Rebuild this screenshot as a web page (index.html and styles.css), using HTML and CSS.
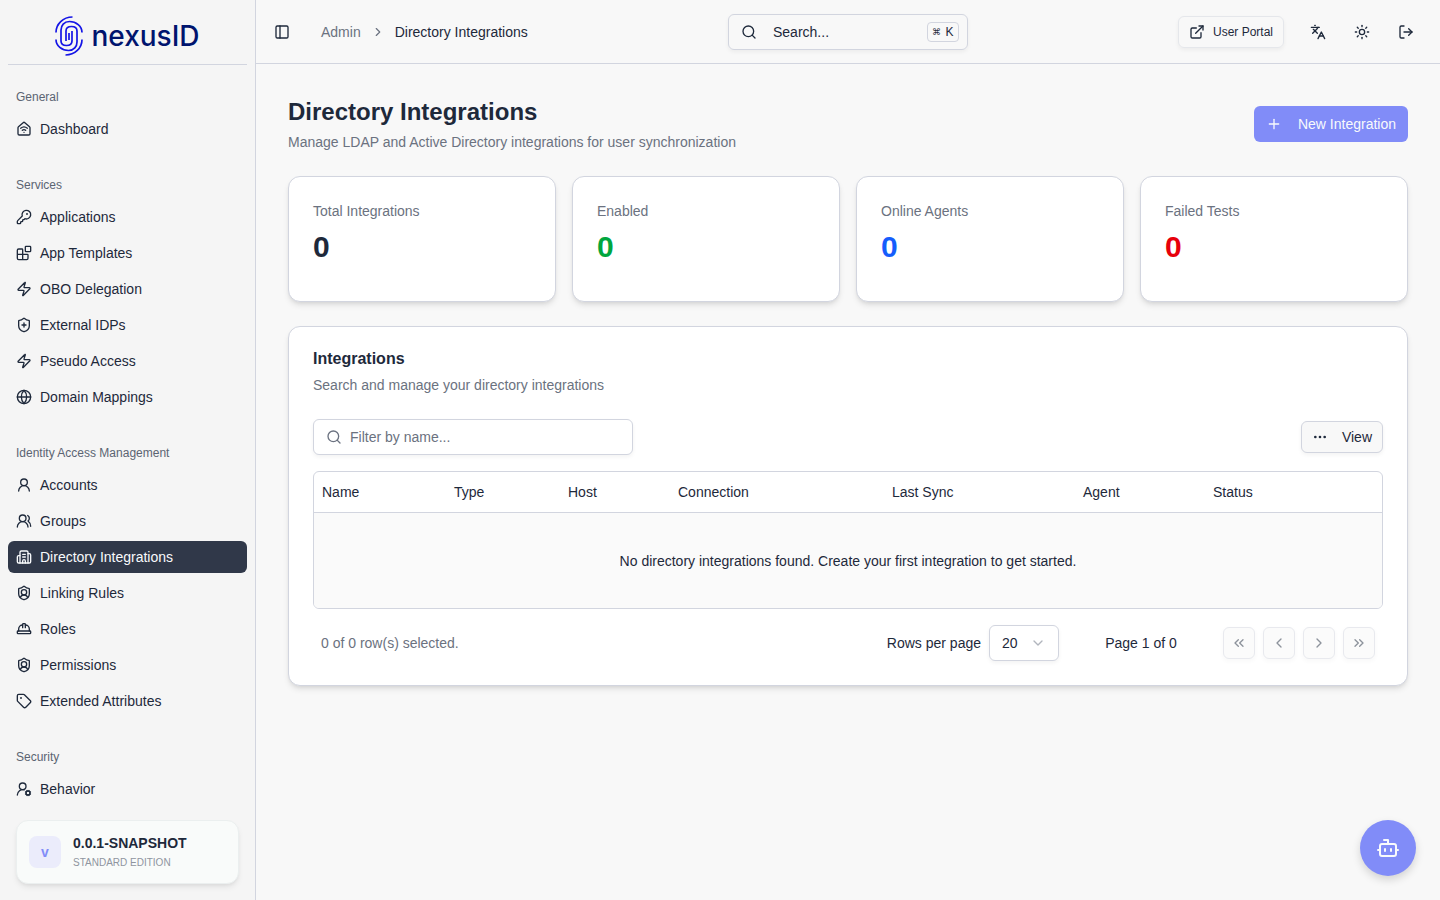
FILE: index.html
```html
<!DOCTYPE html>
<html lang="en">
<head>
    <meta charset="UTF-8">
    <meta name="viewport" content="width=device-width, initial-scale=1.0">
    <title>Directory Integrations - nexusID</title>
    <link rel="stylesheet" href="styles.css">
</head>
<body>
    <!-- Icon sprite -->
    <svg class="sprite" aria-hidden="true">
        <symbol id="i-home" viewBox="0 0 24 24"><path d="M9.5 13.866a4 4 0 0 1 5 .01"/><path d="M12 17h.01"/><path d="M3 10a2 2 0 0 1 .709-1.528l7-6a2 2 0 0 1 2.582 0l7 6A2 2 0 0 1 21 10v9a2 2 0 0 1-2 2H5a2 2 0 0 1-2-2z"/><path d="M7 10.754a8 8 0 0 1 10 0"/></symbol>
        <symbol id="i-key" viewBox="0 0 24 24"><path d="M2.586 17.414A2 2 0 0 0 2 18.828V21a1 1 0 0 0 1 1h3a1 1 0 0 0 1-1v-1a1 1 0 0 1 1-1h1a1 1 0 0 0 1-1v-1a1 1 0 0 1 1-1h.172a2 2 0 0 0 1.414-.586l.814-.814a6.5 6.5 0 1 0-4-4z"/><circle cx="16.5" cy="7.5" r=".5" fill="currentColor"/></symbol>
        <symbol id="i-blocks" viewBox="0 0 24 24"><path d="M10 22V7a1 1 0 0 0-1-1H4a2 2 0 0 0-2 2v12a2 2 0 0 0 2 2h12a2 2 0 0 0 2-2v-5a1 1 0 0 0-1-1H2"/><rect x="14" y="2" width="8" height="8" rx="1"/></symbol>
        <symbol id="i-zap" viewBox="0 0 24 24"><path d="M4 14a1 1 0 0 1-.78-1.63l9.9-10.2a.5.5 0 0 1 .86.46l-1.92 6.02A1 1 0 0 0 13 10h7a1 1 0 0 1 .78 1.63l-9.9 10.2a.5.5 0 0 1-.86-.46l1.92-6.02A1 1 0 0 0 11 14z"/></symbol>
        <symbol id="i-shield-plus" viewBox="0 0 24 24"><path d="M20 13c0 5-3.5 7.5-7.66 8.95a1 1 0 0 1-.67-.01C7.5 20.5 4 18 4 13V6a1 1 0 0 1 1-1c2 0 4.5-1.2 6.24-2.72a1.17 1.17 0 0 1 1.52 0C14.51 3.81 17 5 19 5a1 1 0 0 1 1 1z"/><path d="M9 12h6"/><path d="M12 9v6"/></symbol>
        <symbol id="i-globe" viewBox="0 0 24 24"><circle cx="12" cy="12" r="10"/><path d="M12 2a14.5 14.5 0 0 0 0 20 14.5 14.5 0 0 0 0-20"/><path d="M2 12h20"/></symbol>
        <symbol id="i-user" viewBox="0 0 24 24"><circle cx="12" cy="8" r="5"/><path d="M20 21a8 8 0 0 0-16 0"/></symbol>
        <symbol id="i-users" viewBox="0 0 24 24"><path d="M18 21a8 8 0 0 0-16 0"/><circle cx="10" cy="8" r="5"/><path d="M22 20c0-3.37-2-6.5-4-8a5 5 0 0 0-.45-8.3"/></symbol>
        <symbol id="i-building" viewBox="0 0 24 24"><path d="M10 12h4"/><path d="M10 8h4"/><path d="M14 21v-3a2 2 0 0 0-4 0v3"/><path d="M6 10H4a2 2 0 0 0-2 2v7a2 2 0 0 0 2 2h16a2 2 0 0 0 2-2V9a2 2 0 0 0-2-2h-2"/><path d="M6 21V5a2 2 0 0 1 2-2h8a2 2 0 0 1 2 2v16"/></symbol>
        <symbol id="i-shield-user" viewBox="0 0 24 24"><path d="M20 13c0 5-3.5 7.5-7.66 8.95a1 1 0 0 1-.67-.01C7.5 20.5 4 18 4 13V6a1 1 0 0 1 1-1c2 0 4.5-1.2 6.24-2.72a1.17 1.17 0 0 1 1.52 0C14.51 3.81 17 5 19 5a1 1 0 0 1 1 1z"/><path d="M6.376 18.91a6 6 0 0 1 11.249.003"/><circle cx="12" cy="11" r="4"/></symbol>
        <symbol id="i-hat" viewBox="0 0 24 24"><path d="M10 10V5a1 1 0 0 1 1-1h2a1 1 0 0 1 1 1v5"/><path d="M14 6a6 6 0 0 1 6 6v3"/><path d="M4 15v-3a6 6 0 0 1 6-6"/><rect x="2" y="15" width="20" height="4" rx="1"/></symbol>
        <symbol id="i-tag" viewBox="0 0 24 24"><path d="M12.586 2.586A2 2 0 0 0 11.172 2H4a2 2 0 0 0-2 2v7.172a2 2 0 0 0 .586 1.414l8.704 8.704a2.426 2.426 0 0 0 3.42 0l6.58-6.58a2.426 2.426 0 0 0 0-3.42z"/><circle cx="7.5" cy="7.5" r=".5" fill="currentColor"/></symbol>
        <symbol id="i-user-cog" viewBox="0 0 24 24"><path d="M2 21a8 8 0 0 1 10.434-7.62"/><circle cx="10" cy="8" r="5"/><circle cx="18" cy="18" r="3"/><path d="m14.305 19.53.923-.382"/><path d="m15.228 16.852-.923-.383"/><path d="m16.852 15.228-.383-.923"/><path d="m16.852 20.772-.383.924"/><path d="m19.148 15.228.383-.923"/><path d="m19.53 21.696-.382-.924"/><path d="m20.772 16.852.924-.383"/><path d="m20.772 19.148.924.383"/></symbol>
        <symbol id="i-panel" viewBox="0 0 24 24"><rect x="3" y="3" width="18" height="18" rx="2"/><path d="M9 3v18"/></symbol>
        <symbol id="i-search" viewBox="0 0 24 24"><path d="m21 21-4.34-4.34"/><circle cx="11" cy="11" r="8"/></symbol>
        <symbol id="i-external" viewBox="0 0 24 24"><path d="M15 3h6v6"/><path d="M10 14 21 3"/><path d="M18 13v6a2 2 0 0 1-2 2H5a2 2 0 0 1-2-2V8a2 2 0 0 1 2-2h6"/></symbol>
        <symbol id="i-languages" viewBox="0 0 24 24"><path d="m5 8 6 6"/><path d="m4 14 6-6 2-3"/><path d="M2 5h12"/><path d="M7 2h1"/><path d="m22 22-5-10-5 10"/><path d="M14 18h6"/></symbol>
        <symbol id="i-sun" viewBox="0 0 24 24"><circle cx="12" cy="12" r="4"/><path d="M12 2v2"/><path d="M12 20v2"/><path d="m4.93 4.93 1.41 1.41"/><path d="m17.66 17.66 1.41 1.41"/><path d="M2 12h2"/><path d="M20 12h2"/><path d="m6.34 17.66-1.41 1.41"/><path d="m19.07 4.93-1.41 1.41"/></symbol>
        <symbol id="i-logout" viewBox="0 0 24 24"><path d="m16 17 5-5-5-5"/><path d="M21 12H9"/><path d="M9 21H5a2 2 0 0 1-2-2V5a2 2 0 0 1 2-2h4"/></symbol>
        <symbol id="i-plus" viewBox="0 0 24 24"><path d="M5 12h14"/><path d="M12 5v14"/></symbol>
        <symbol id="i-dots" viewBox="0 0 24 24"><circle cx="12" cy="12" r="1"/><circle cx="19" cy="12" r="1"/><circle cx="5" cy="12" r="1"/></symbol>
        <symbol id="i-down" viewBox="0 0 24 24"><path d="m6 9 6 6 6-6"/></symbol>
        <symbol id="i-left" viewBox="0 0 24 24"><path d="m15 18-6-6 6-6"/></symbol>
        <symbol id="i-right" viewBox="0 0 24 24"><path d="m9 18 6-6-6-6"/></symbol>
        <symbol id="i-first" viewBox="0 0 24 24"><path d="m11 17-5-5 5-5"/><path d="m18 17-5-5 5-5"/></symbol>
        <symbol id="i-last" viewBox="0 0 24 24"><path d="m6 17 5-5-5-5"/><path d="m13 17 5-5-5-5"/></symbol>
        <symbol id="i-bot" viewBox="0 0 24 24"><path d="M12 8V4H8"/><rect x="4" y="8" width="16" height="12" rx="2"/><path d="M2 14h2"/><path d="M20 14h2"/><path d="M15 13v2"/><path d="M9 13v2"/></symbol>
    </svg>

    <div class="layout">
        <aside class="sidebar">
            <a class="logo" href="#">
                <svg class="logo-mark" viewBox="0 0 28 40" aria-hidden="true">
                    <g id="whorl">
                        <path d="M17.500 1C8 1 1 8 1 16.500"/>
                        <path d="M27 16.500C27 10 21 5.500 14.500 5.500 9 5.500 6 9.500 6 14v11c0 3 2.500 4.500 5.500 4.500s5.500-1.500 5.500-4.500"/>
                    </g>
                    <use href="#whorl" transform="rotate(180 14 20)"/>
                    <path d="M11 25V15M17 25V15M14 17v7"/>
                </svg>
                <span class="logo-text">nexusID</span>
            </a>

            <nav class="nav">
                <section class="nav-group">
                    <h2 class="nav-label">General</h2>
                    <a class="nav-item" href="#"><svg class="icon"><use href="#i-home"/></svg>Dashboard</a>
                </section>
                <section class="nav-group">
                    <h2 class="nav-label">Services</h2>
                    <a class="nav-item" href="#"><svg class="icon"><use href="#i-key"/></svg>Applications</a>
                    <a class="nav-item" href="#"><svg class="icon"><use href="#i-blocks"/></svg>App Templates</a>
                    <a class="nav-item" href="#"><svg class="icon"><use href="#i-zap"/></svg>OBO Delegation</a>
                    <a class="nav-item" href="#"><svg class="icon"><use href="#i-shield-plus"/></svg>External IDPs</a>
                    <a class="nav-item" href="#"><svg class="icon"><use href="#i-zap"/></svg>Pseudo Access</a>
                    <a class="nav-item" href="#"><svg class="icon"><use href="#i-globe"/></svg>Domain Mappings</a>
                </section>
                <section class="nav-group">
                    <h2 class="nav-label">Identity Access Management</h2>
                    <a class="nav-item" href="#"><svg class="icon"><use href="#i-user"/></svg>Accounts</a>
                    <a class="nav-item" href="#"><svg class="icon"><use href="#i-users"/></svg>Groups</a>
                    <a class="nav-item active" href="#" aria-current="page"><svg class="icon"><use href="#i-building"/></svg>Directory Integrations</a>
                    <a class="nav-item" href="#"><svg class="icon"><use href="#i-shield-user"/></svg>Linking Rules</a>
                    <a class="nav-item" href="#"><svg class="icon"><use href="#i-hat"/></svg>Roles</a>
                    <a class="nav-item" href="#"><svg class="icon"><use href="#i-shield-user"/></svg>Permissions</a>
                    <a class="nav-item" href="#"><svg class="icon"><use href="#i-tag"/></svg>Extended Attributes</a>
                </section>
                <section class="nav-group">
                    <h2 class="nav-label">Security</h2>
                    <a class="nav-item" href="#"><svg class="icon"><use href="#i-user-cog"/></svg>Behavior</a>
                </section>
            </nav>

            <div class="sidebar-footer">
                <div class="version">
                    <span class="version-badge">v</span>
                    <div>
                        <div class="version-number">0.0.1-SNAPSHOT</div>
                        <div class="version-edition">STANDARD EDITION</div>
                    </div>
                </div>
            </div>
        </aside>

        <div class="content">
            <header class="topbar">
                <div class="topbar-left">
                    <button class="icon-btn small" aria-label="Toggle sidebar"><svg class="icon"><use href="#i-panel"/></svg></button>
                    <nav class="breadcrumb" aria-label="Breadcrumb">
                        <a href="#">Admin</a>
                        <svg class="icon crumb-sep"><use href="#i-right"/></svg>
                        <span class="current">Directory Integrations</span>
                    </nav>
                </div>
                <button class="search-btn">
                    <svg class="icon"><use href="#i-search"/></svg>
                    <span>Search...</span>
                    <kbd><span class="cmd">⌘</span>K</kbd>
                </button>
                <div class="topbar-right">
                    <a class="portal-btn" href="#"><svg class="icon"><use href="#i-external"/></svg>User Portal</a>
                    <div class="topbar-actions">
                        <button class="icon-btn" aria-label="Language"><svg class="icon"><use href="#i-languages"/></svg></button>
                        <button class="icon-btn" aria-label="Theme"><svg class="icon"><use href="#i-sun"/></svg></button>
                        <button class="icon-btn" aria-label="Log out"><svg class="icon"><use href="#i-logout"/></svg></button>
                    </div>
                </div>
            </header>

            <main class="page">
                <div class="page-header">
                    <div>
                        <h1>Directory Integrations</h1>
                        <p class="muted">Manage LDAP and Active Directory integrations for user synchronization</p>
                    </div>
                    <button class="primary-btn"><svg class="icon"><use href="#i-plus"/></svg>New Integration</button>
                </div>

                <div class="stats">
                    <div class="card stat">
                        <div class="muted">Total Integrations</div>
                        <div class="stat-value">0</div>
                    </div>
                    <div class="card stat">
                        <div class="muted">Enabled</div>
                        <div class="stat-value green">0</div>
                    </div>
                    <div class="card stat">
                        <div class="muted">Online Agents</div>
                        <div class="stat-value blue">0</div>
                    </div>
                    <div class="card stat">
                        <div class="muted">Failed Tests</div>
                        <div class="stat-value red">0</div>
                    </div>
                </div>

                <section class="card panel">
                    <h2>Integrations</h2>
                    <p class="muted">Search and manage your directory integrations</p>

                    <div class="toolbar">
                        <div class="filter">
                            <svg class="icon"><use href="#i-search"/></svg>
                            <input type="text" placeholder="Filter by name..." aria-label="Filter by name">
                        </div>
                        <button class="view-btn"><svg class="icon"><use href="#i-dots"/></svg>View</button>
                    </div>

                    <div class="table-wrap">
                        <table>
                            <thead>
                                <tr>
                                    <th class="col-name">Name</th>
                                    <th class="col-type">Type</th>
                                    <th class="col-host">Host</th>
                                    <th class="col-connection">Connection</th>
                                    <th class="col-sync">Last Sync</th>
                                    <th class="col-agent">Agent</th>
                                    <th class="col-status">Status</th>
                                </tr>
                            </thead>
                            <tbody>
                                <tr>
                                    <td class="empty" colspan="7">No directory integrations found. Create your first integration to get started.</td>
                                </tr>
                            </tbody>
                        </table>
                    </div>

                    <div class="pagination">
                        <div class="muted">0 of 0 row(s) selected.</div>
                        <div class="pagination-controls">
                            <div class="rows-per-page">
                                <label for="pageSize">Rows per page</label>
                                <div class="select-wrap">
                                    <select id="pageSize">
                                        <option>10</option>
                                        <option selected>20</option>
                                        <option>50</option>
                                    </select>
                                    <svg class="icon"><use href="#i-down"/></svg>
                                </div>
                            </div>
                            <div class="page-count">Page 1 of 0</div>
                            <div class="page-buttons">
                                <button disabled aria-label="First page"><svg class="icon"><use href="#i-first"/></svg></button>
                                <button disabled aria-label="Previous page"><svg class="icon"><use href="#i-left"/></svg></button>
                                <button disabled aria-label="Next page"><svg class="icon"><use href="#i-right"/></svg></button>
                                <button disabled aria-label="Last page"><svg class="icon"><use href="#i-last"/></svg></button>
                            </div>
                        </div>
                    </div>
                </section>
            </main>
        </div>
    </div>

    <button class="chat-btn" aria-label="Open assistant"><svg class="icon"><use href="#i-bot"/></svg></button>
</body>
</html>
```
FILE: styles.css
```css
* {
    box-sizing: border-box;
}

body {
    margin: 0;
    font-family: "Liberation Sans", Arial, sans-serif;
    font-size: 14px;
    line-height: 20px;
    color: #1e293b;
    background-color: #f8f8f8;
}

h1, h2, p {
    margin: 0;
}

a {
    color: inherit;
    text-decoration: none;
}

button, input, select {
    font: inherit;
    color: inherit;
}

button {
    padding: 0;
    border: none;
    background: none;
    cursor: pointer;
}

.sprite {
    display: none;
}

.icon {
    width: 16px;
    height: 16px;
    flex-shrink: 0;
    fill: none;
    stroke: currentColor;
    stroke-width: 2;
    stroke-linecap: round;
    stroke-linejoin: round;
}

.muted {
    color: #6b7280;
}

.layout {
    display: flex;
    min-height: 100vh;
}

/* Sidebar */
.sidebar {
    position: sticky;
    top: 0;
    display: flex;
    flex-direction: column;
    width: 256px;
    height: 100vh;
    flex-shrink: 0;
    background-color: #f5f5f5;
    border-right: 1px solid #d2d5df;
}

.logo {
    display: flex;
    align-items: center;
    justify-content: center;
    gap: 8px;
    margin: 8px 8px 0;
    padding: 8px 0;
    border-bottom: 1px solid #d2d5df;
}

.logo-mark {
    width: 28px;
    height: 40px;
    fill: none;
    stroke: #1414e6;
    stroke-width: 1.7;
}

.logo-text {
    font-family: Inter, sans-serif;
    font-size: 28px;
    font-weight: 500;
    color: #00146e;
}

.nav {
    flex: 1;
    min-height: 0;
    padding: 8px 0 0;
    overflow-y: auto;
    scrollbar-width: none;
}

.nav-group {
    display: flex;
    flex-direction: column;
    gap: 4px;
    padding: 8px;
}

.nav-group + .nav-group {
    margin-top: 8px;
}

.nav-label {
    margin-bottom: -4px;
    padding: 0 8px;
    font-size: 12px;
    font-weight: 400;
    line-height: 32px;
    color: #5b6472;
}

.nav-item {
    display: flex;
    align-items: center;
    gap: 8px;
    padding: 6px 8px;
    border-radius: 6px;
}

.nav-item:hover {
    background-color: #e5e7eb;
}

.nav-item.active {
    color: #f8fafc;
    background-color: #303849;
}

.sidebar-footer {
    padding: 8px 16px 16px;
}

.version {
    display: flex;
    align-items: center;
    gap: 12px;
    padding: 12px;
    border: 1px solid #ebefef;
    border-radius: 12px;
    background-color: #f9fbfa;
    box-shadow: 0 4px 6px -1px rgba(0,0,0,0.08), 0 2px 4px -2px rgba(0,0,0,0.08);
}

.version-badge {
    width: 32px;
    height: 32px;
    border-radius: 8px;
    background-color: #ebecfb;
    color: #818cf8;
    font-weight: bold;
    line-height: 32px;
    text-align: center;
}

.version-number {
    margin-bottom: 2px;
    font-weight: bold;
}

.version-edition {
    font-size: 10px;
    line-height: 16px;
    color: #8f959f;
}

/* Top bar */
.content {
    flex: 1;
    min-width: 0;
}

.topbar {
    display: grid;
    grid-template-columns: 1fr 240px 1fr;
    align-items: center;
    height: 64px;
    padding: 0 16px;
    border-bottom: 1px solid #d2d5df;
}

.topbar-left {
    display: flex;
    align-items: center;
    gap: 25px;
}

.breadcrumb {
    display: flex;
    align-items: center;
    gap: 10px;
    color: #6b7280;
}

.breadcrumb .current {
    color: #1e293b;
}

.crumb-sep {
    width: 14px;
    height: 14px;
}

.icon-btn {
    display: flex;
    align-items: center;
    justify-content: center;
    width: 36px;
    height: 36px;
    border-radius: 6px;
}

.icon-btn.small {
    width: 28px;
    height: 28px;
    margin-left: -4px;
}

.search-btn {
    display: flex;
    align-items: center;
    gap: 16px;
    height: 36px;
    padding: 0 8px 0 12px;
    border: 1px solid #d2d5df;
    border-radius: 6px;
    box-shadow: 0 2px 4px rgba(0,0,0,0.05);
}

.search-btn kbd {
    display: flex;
    align-items: center;
    justify-content: center;
    gap: 4px;
    width: 32px;
    margin-left: auto;
    border: 1px solid #d2d5df;
    border-radius: 4px;
    font-family: "Liberation Sans", Arial, sans-serif;
    font-size: 12px;
    line-height: 18px;
}

.search-btn .cmd {
    font-size: 9px;
}

.topbar-right {
    display: flex;
    align-items: center;
    justify-content: flex-end;
    gap: 16px;
}

.topbar-actions {
    display: flex;
    gap: 8px;
}

.portal-btn {
    display: flex;
    align-items: center;
    gap: 8px;
    height: 32px;
    padding: 0 10px;
    border: 1px solid #e5e7eb;
    border-radius: 6px;
    font-size: 12px;
    box-shadow: 0 2px 4px rgba(0,0,0,0.05);
}

/* Page */
.page {
    display: flex;
    flex-direction: column;
    gap: 24px;
    padding: 32px;
}

.page-header {
    display: flex;
    align-items: center;
    justify-content: space-between;
}

h1 {
    margin-bottom: 4px;
    font-size: 24px;
    line-height: 32px;
}

.primary-btn {
    display: flex;
    align-items: center;
    gap: 16px;
    height: 36px;
    padding: 0 12px;
    border-radius: 6px;
    background-color: #818cf8;
    color: #f8fafc;
}

.card {
    border: 1px solid #d2d5df;
    border-radius: 12px;
    background-color: white;
    box-shadow: 0 4px 6px -1px rgba(0,0,0,0.1), 0 2px 4px -2px rgba(0,0,0,0.1);
}

.stats {
    display: grid;
    grid-template-columns: repeat(4, 1fr);
    gap: 16px;
}

.stat {
    padding: 24px 24px 36px;
}

.stat-value {
    margin-top: 8px;
    font-size: 30px;
    font-weight: bold;
    line-height: 36px;
}

.green {
    color: #00a63e;
}

.blue {
    color: #155dfc;
}

.red {
    color: #e7000b;
}

.panel {
    padding: 24px;
}

.panel h2 {
    margin-bottom: 8px;
    font-size: 16px;
    line-height: 16px;
}

.toolbar {
    display: flex;
    align-items: center;
    justify-content: space-between;
    margin: 24px 0 16px;
}

.filter {
    position: relative;
    width: 320px;
}

.filter .icon {
    position: absolute;
    top: 10px;
    left: 13px;
    color: #6b7280;
}

.filter input {
    display: block;
    width: 100%;
    height: 36px;
    padding: 0 12px 0 36px;
    border: 1px solid #d2d5df;
    border-radius: 6px;
    background-color: white;
    box-shadow: 0 2px 4px rgba(0,0,0,0.05);
}

.filter input::placeholder {
    color: #6b7280;
}

.view-btn {
    display: flex;
    align-items: center;
    gap: 14px;
    height: 32px;
    padding: 0 10px;
    border: 1px solid #d2d5df;
    border-radius: 6px;
    background-color: #f8f8f8;
    box-shadow: 0 2px 4px rgba(0,0,0,0.05);
}

.table-wrap {
    border: 1px solid #d2d5df;
    border-radius: 6px;
    overflow: hidden;
}

table {
    width: 100%;
    border-spacing: 0;
    table-layout: fixed;
}

th {
    height: 41px;
    padding: 0 8px;
    border-bottom: 1px solid #d2d5df;
    font-weight: 400;
    text-align: left;
}

.col-name { width: 132px; }
.col-type { width: 114px; }
.col-host { width: 110px; }
.col-connection { width: 214px; }
.col-sync { width: 191px; }
.col-agent { width: 130px; }
.col-status { width: 177px; }

.empty {
    height: 95px;
    padding: 8px;
    background-color: #fafafa;
    text-align: center;
}

.pagination {
    display: flex;
    align-items: center;
    justify-content: space-between;
    margin-top: 16px;
    padding: 0 8px;
}

.pagination-controls {
    display: flex;
    align-items: center;
    gap: 32px;
}

.rows-per-page {
    display: flex;
    align-items: center;
    gap: 8px;
}

.select-wrap {
    position: relative;
}

.select-wrap select {
    display: block;
    width: 70px;
    height: 36px;
    padding: 0 12px;
    border: 1px solid #d2d5df;
    border-radius: 6px;
    appearance: none;
    background-color: white;
    box-shadow: 0 2px 4px rgba(0,0,0,0.05);
}

.select-wrap .icon {
    position: absolute;
    top: 10px;
    right: 13px;
    color: #b1b5bd;
    pointer-events: none;
}

.page-count {
    width: 100px;
    text-align: center;
}

.page-buttons {
    display: flex;
    gap: 8px;
}

.page-buttons button {
    display: flex;
    align-items: center;
    justify-content: center;
    width: 32px;
    height: 32px;
    border: 1px solid #d2d5df;
    border-radius: 6px;
    background-color: #f8f8f8;
    box-shadow: 0 2px 4px rgba(0,0,0,0.05);
}

.page-buttons button:disabled {
    opacity: 0.5;
    cursor: default;
}

.chat-btn {
    position: fixed;
    right: 24px;
    bottom: 24px;
    display: flex;
    align-items: center;
    justify-content: center;
    width: 56px;
    height: 56px;
    border-radius: 50%;
    background-color: #818cf8;
    color: #f8fafc;
    box-shadow: 0 4px 8px rgba(0,0,0,0.15);
}

.chat-btn .icon {
    width: 24px;
    height: 24px;
}
```
